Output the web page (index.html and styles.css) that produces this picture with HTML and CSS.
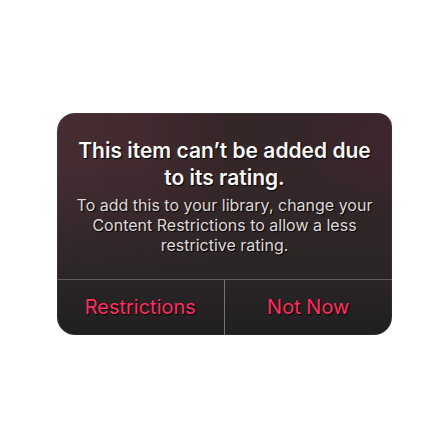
FILE: index.html
```
<!DOCTYPE html>
<html lang="en">
<head>
<meta charset="utf-8">
<meta name="viewport" content="width=device-width, initial-scale=1">
<title>Content restrictions</title>
<link rel="stylesheet" href="styles.css">
</head>
<body>
<main class="alert" role="alertdialog" aria-labelledby="alert-title" aria-describedby="alert-message">
  <div class="alert-content">
    <h1 class="alert-title" id="alert-title">This item can’t be added due to its rating.</h1>
    <p class="alert-message" id="alert-message">To add this to your library, change your Content Restrictions to allow a less restrictive rating.</p>
  </div>
  <div class="alert-actions">
    <button class="alert-button" type="button">Restrictions</button>
    <button class="alert-button" type="button">Not Now</button>
  </div>
</main>
</body>
</html>
```
FILE: styles.css
```
* {
  box-sizing: border-box;
}

body {
  margin: 0;
  min-height: 100vh;
  padding: 4px 52px 0 57px;
  display: grid;
  place-items: center;
  background: #fff;
  font-family: Inter, "Liberation Sans", sans-serif;
}

.alert {
  width: 100%;
  max-width: 400px;
  overflow: hidden;
  border-radius: 18px 14px 18px 18px;
  background:
    linear-gradient(to bottom, transparent 25%, #2a2526 75%, #211f20 100%),
    radial-gradient(circle at 100% 10%, #40252e 0, transparent 22%),
    linear-gradient(to right, #452d32 0%, #422a2f 26%, #352628 52%, #35272a 100%);
  box-shadow: inset 0 0 1px #8a7b7f;
}

.alert-content {
  padding: 24px 16px;
  text-align: center;
}

.alert-title {
  margin: 0 0 4px;
  color: #f8f8f8;
  font-size: 21px;
  font-weight: 600;
  line-height: 27px;
  text-shadow: 1px 1px 1px #000;
}

.alert-message {
  margin: 0;
  color: #dedada;
  font-size: 16px;
  line-height: 20px;
  text-shadow: 1px 1px 1px #000;
}

.alert-actions {
  display: grid;
  grid-template-columns: 1fr 1fr;
  border-top: 1px solid #625c5d;
}

.alert-button {
  padding: 14px 0;
  border: 0;
  background: transparent;
  color: #ff2e63;
  font-family: inherit;
  font-size: 20px;
  line-height: 27px;
  text-shadow: 1px 1px 1px #000;
}

.alert-button:first-child {
  border-right: 1px solid #777273;
}
```
